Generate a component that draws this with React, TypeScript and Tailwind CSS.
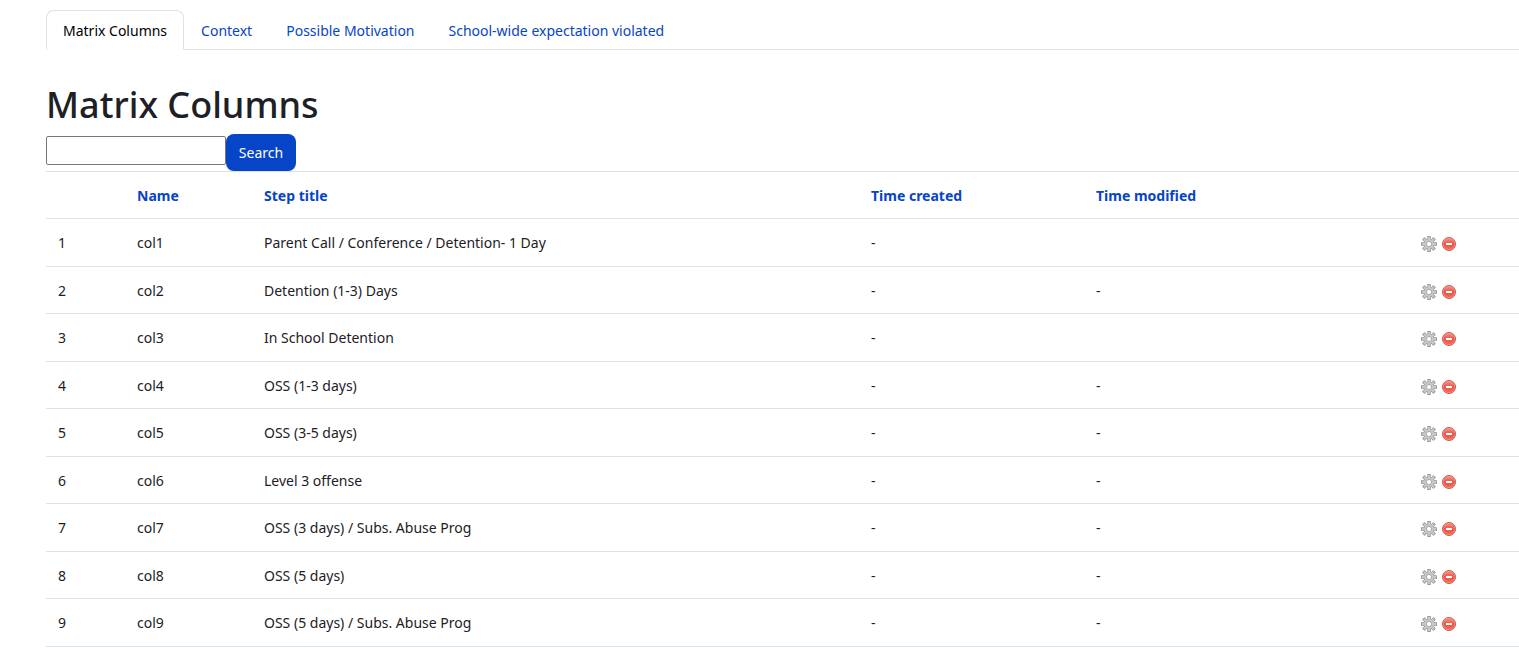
import { useState } from 'react';
import { clsx } from 'clsx';

type Row = {
  id: number;
  name: string;
  title: string;
  created: string;
  modified: string;
};

const TABS = [
  'Matrix Columns',
  'Context',
  'Possible Motivation',
  'School-wide expectation violated',
];

const ROWS: Row[] = [
  { id: 1, name: 'col1', title: 'Parent Call / Conference / Detention- 1 Day', created: '-', modified: '' },
  { id: 2, name: 'col2', title: 'Detention (1-3) Days', created: '-', modified: '-' },
  { id: 3, name: 'col3', title: 'In School Detention', created: '-', modified: '' },
  { id: 4, name: 'col4', title: 'OSS (1-3 days)', created: '-', modified: '-' },
  { id: 5, name: 'col5', title: 'OSS (3-5 days)', created: '-', modified: '-' },
  { id: 6, name: 'col6', title: 'Level 3 offense', created: '-', modified: '-' },
  { id: 7, name: 'col7', title: 'OSS (3 days) / Subs. Abuse Prog', created: '-', modified: '-' },
  { id: 8, name: 'col8', title: 'OSS (5 days)', created: '-', modified: '-' },
  { id: 9, name: 'col9', title: 'OSS (5 days) / Subs. Abuse Prog', created: '-', modified: '-' },
];

const TEETH = [0, 45, 90, 135, 180, 225, 270, 315];

function GearIcon() {
  return (
    <svg width="16" height="16" viewBox="0 0 16 16" aria-hidden="true">
      <g fill="#8a8a8a">
        {TEETH.map((angle) => (
          <path key={angle} d="M6.3 4V.5q0-.5.5-.5h2.4q.5 0 .5.5V4z" transform={`rotate(${angle} 8 8)`} />
        ))}
        <circle cx="8" cy="8" r="5.4" />
      </g>
      <g fill="#c8c8c8">
        {TEETH.map((angle) => (
          <path key={angle} d="M6.8 4.5V.7h2.4v3.8z" transform={`rotate(${angle} 8 8)`} />
        ))}
        <circle cx="8" cy="8" r="4.9" />
      </g>
      <circle cx="8" cy="8" r="2.7" fill="none" stroke="#b0b0b0" strokeWidth="1" />
      <circle cx="8" cy="8" r="2" fill="#fff" />
    </svg>
  );
}

function DeleteIcon() {
  return (
    <svg width="16" height="16" viewBox="0 0 16 16" aria-hidden="true">
      <defs>
        <linearGradient id="delete-fill" x1="0" y1="0" x2="0" y2="1">
          <stop offset="0" stopColor="#f59a8c" />
          <stop offset="0.5" stopColor="#ea5345" />
          <stop offset="1" stopColor="#f0705f" />
        </linearGradient>
      </defs>
      <circle cx="8" cy="8" r="6.5" fill="url(#delete-fill)" stroke="#cc5a4e" />
      <circle cx="8" cy="8" r="5.6" fill="none" stroke="#f59a8e" strokeWidth="0.6" />
      <rect x="5" y="7" width="6" height="2" fill="#fff" />
    </svg>
  );
}

export default function App() {
  const [activeTab, setActiveTab] = useState(TABS[0]);
  const [query, setQuery] = useState('');

  return (
    <div className="bg-white pl-[46px] pt-[10px] font-['Noto_Sans',sans-serif] text-sm text-[#1d2125]">
      <nav className="flex border-b border-[#dee2e6]">
        {TABS.map((tab) => (
          <a
            key={tab}
            href="#"
            onClick={() => setActiveTab(tab)}
            className={clsx(
              '-mb-px h-10 rounded-t-lg border px-4 pt-[10px]',
              tab === activeTab
                ? 'border-[#dee2e6] border-b-white bg-white text-black'
                : 'border-transparent text-[#0644c8]'
            )}
          >
            {tab}
          </a>
        ))}
      </nav>

      <h1 className="mt-8 text-[36px] font-medium leading-[46px]">Matrix Columns</h1>

      <form className="mt-[6px] flex items-start" onSubmit={(e) => e.preventDefault()}>
        <input
          type="text"
          aria-label="Search"
          value={query}
          onChange={(e) => setQuery(e.target.value)}
          className="mt-0.5 h-[29px] w-[180px] rounded-[2px] border border-[#767676] px-1"
        />
        <button type="submit" className="h-[37px] w-[70px] rounded-lg bg-[#0644c8] text-white">
          Search
        </button>
      </form>

      <table className="w-full table-fixed border-collapse text-left">
        <colgroup>
          <col className="w-[79px]" />
          <col className="w-[127px]" />
          <col />
          <col className="w-[225px]" />
          <col className="w-[325px]" />
          <col className="w-[110px]" />
        </colgroup>
        <thead>
          <tr className="h-[47px] border-y border-[#dee2e6] text-[#0644c8]">
            <th />
            <th className="px-3 pt-0.5"><a href="#">Name</a></th>
            <th className="px-3 pt-0.5"><a href="#">Step title</a></th>
            <th className="px-3 pt-0.5"><a href="#">Time created</a></th>
            <th className="px-3 pt-0.5"><a href="#">Time modified</a></th>
            <th />
          </tr>
        </thead>
        <tbody>
          {ROWS.map((row) => (
            <tr key={row.id} className="border-b border-[#dee2e6] odd:h-[48px] even:h-[47px]">
              <td className="px-3 pt-px">{row.id}</td>
              <td className="px-3 pt-px">{row.name}</td>
              <td className="px-3 pt-px">{row.title}</td>
              <td className="px-3 pt-px">{row.created}</td>
              <td className="px-3 pt-px">{row.modified}</td>
              <td className="px-3 pt-px">
                <div className="flex gap-1 pt-0.5">
                  <button type="button" aria-label={`Edit ${row.name}`}>
                    <GearIcon />
                  </button>
                  <button type="button" aria-label={`Delete ${row.name}`}>
                    <DeleteIcon />
                  </button>
                </div>
              </td>
            </tr>
          ))}
        </tbody>
      </table>
    </div>
  );
}
